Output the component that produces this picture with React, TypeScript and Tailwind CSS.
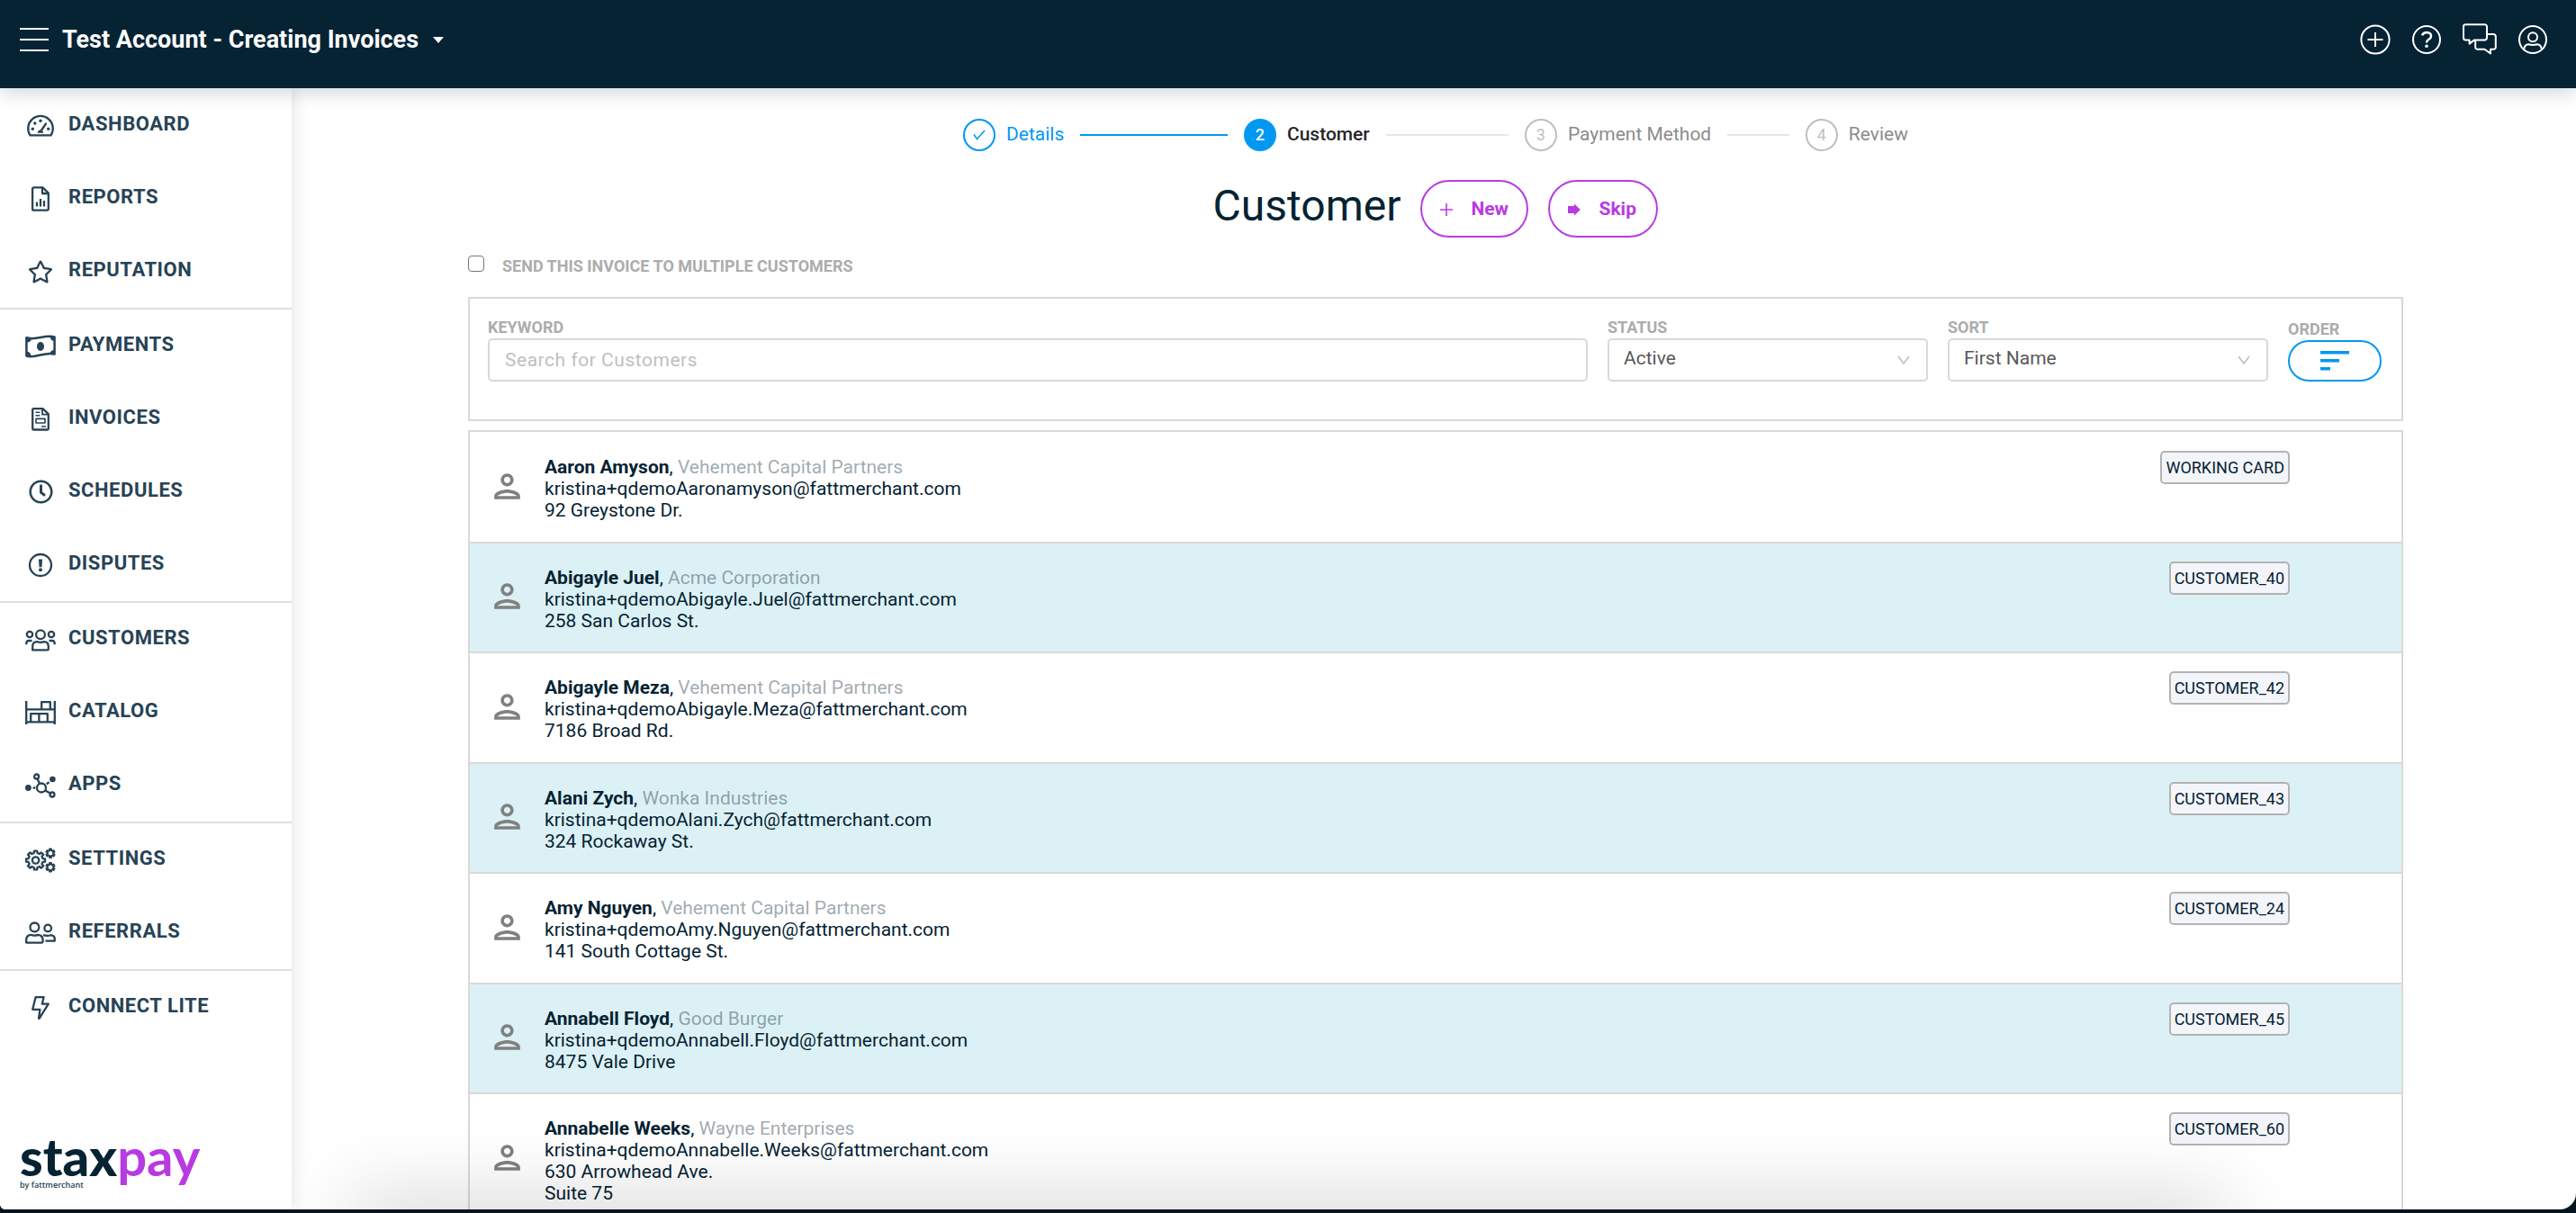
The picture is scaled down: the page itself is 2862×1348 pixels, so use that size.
import type { ReactNode } from 'react';
import { FaRegClock, FaRegStar } from 'react-icons/fa';
import { MdOutlinePerson } from 'react-icons/md';

interface NavItem {
  label: string;
  icon: ReactNode;
}

interface Customer {
  name: string;
  company: string;
  email: string;
  address: string[];
  tag: string;
}

// outline of a cog with rounded-off square teeth
function gearPath(cx: number, cy: number, outer: number, inner: number, teeth: number) {
  const points: string[] = [];
  const step = (Math.PI * 2) / teeth;
  for (let i = 0; i < teeth; i++) {
    const a = i * step - Math.PI / 2;
    const corners = [
      [inner, -0.3],
      [outer, -0.2],
      [outer, 0.2],
      [inner, 0.3],
    ];
    corners.forEach(([r, f]) => {
      const x = cx + r * Math.cos(a + f * step);
      const y = cy + r * Math.sin(a + f * step);
      points.push(`${x.toFixed(2)} ${y.toFixed(2)}`);
    });
  }
  return `M${points.join('L')}Z`;
}

function NavIcon({ children }: { children: ReactNode }) {
  return (
    <svg
      viewBox="0 0 34 28"
      className="w-[34px] h-7"
      fill="none"
      stroke="currentColor"
      strokeWidth="2.3"
      strokeLinejoin="round"
      aria-hidden="true"
    >
      {children}
    </svg>
  );
}

const navGroups: NavItem[][] = [
  [
    {
      label: 'DASHBOARD',
      icon: (
        <NavIcon>
          <path d="M5.5 24.3H28.5A13.8 13.8 0 1 0 5.5 24.3Z" />
          <path d="M17.5 19.5L23 11.5" strokeLinecap="round" />
          <path d="M14 21.2a3 3 0 0 1 5.8 0z" fill="currentColor" strokeWidth="1" />
          <g fill="currentColor" stroke="none">
            <circle cx="17" cy="8.3" r="1.7" />
            <circle cx="10.8" cy="11" r="1.7" />
            <circle cx="8.3" cy="17.2" r="1.7" />
            <circle cx="25.7" cy="17.2" r="1.7" />
          </g>
        </NavIcon>
      ),
    },
    {
      label: 'REPORTS',
      icon: (
        <NavIcon>
          <path d="M9.6 1.3H19.5L25.8 7.6V25.2a1.5 1.5 0 0 1-1.5 1.5H9.6a1.5 1.5 0 0 1-1.5-1.5V2.8a1.5 1.5 0 0 1 1.5-1.5z" />
          <path d="M19 1.8V8H25.4" />
          <path d="M13 17.5v5M17 14v8.5M21 16v6.5" />
        </NavIcon>
      ),
    },
    { label: 'REPUTATION', icon: <FaRegStar className="size-7" /> },
  ],
  [
    {
      label: 'PAYMENTS',
      icon: (
        <NavIcon>
          <path d="M1.4 4.3C12 8 21 0.4 32.6 3.4V22.6C22 19.4 12 27.6 1.4 24.6Z" strokeWidth="2.5" />
          <ellipse cx="17" cy="14" rx="4" ry="5" fill="currentColor" stroke="none" />
          <path
            d="M2 5.5L7 6.5Q6 9 2 9.5ZM32 3.5L27.5 3.5Q28.5 7.5 32 8ZM2 19.5Q5.5 20 6.5 24L2 24.5ZM32 18Q28.5 18 27.5 21.5L32 22.5Z"
            fill="currentColor"
            stroke="none"
          />
        </NavIcon>
      ),
    },
    {
      label: 'INVOICES',
      icon: (
        <NavIcon>
          <path d="M9.2 2.2H19.5L25.8 8.2V24.5a1 1 0 0 1-1 1H9.2a1 1 0 0 1-1-1V3.2a1 1 0 0 1 1-1z" />
          <path d="M19 2.4V8.6H25.4" strokeWidth="1.8" />
          <path d="M11.5 6.2h4.8M11.5 9.8h4.8M18 22h5" strokeWidth="1.6" />
          <path d="M12 13.4H22V18H12z" strokeWidth="1.6" />
        </NavIcon>
      ),
    },
    { label: 'SCHEDULES', icon: <FaRegClock className="size-[27px]" /> },
    {
      label: 'DISPUTES',
      icon: (
        <NavIcon>
          <circle cx="17" cy="14" r="12" />
          <path d="M15 7.6h4l-.5 8.6h-3z" fill="currentColor" stroke="none" />
          <circle cx="17" cy="19.2" r="2" fill="currentColor" stroke="none" />
        </NavIcon>
      ),
    },
  ],
  [
    {
      label: 'CUSTOMERS',
      icon: (
        <NavIcon>
          <circle cx="17" cy="8.2" r="4.9" />
          <circle cx="5" cy="8" r="3.2" />
          <circle cx="29" cy="8" r="3.2" />
          <path d="M8.2 25.4V21.5Q8.2 16.4 13 16.2Q17 17.6 21 16.2Q25.8 16.4 25.8 21.5V24.4a1 1 0 0 1-1 1H9.2a1 1 0 0 1-1-1z" />
          <path d="M1.2 19.2Q1.2 15 4 15H7.5M32.8 19.2Q32.8 15 30 15H26.5" />
        </NavIcon>
      ),
    },
    {
      label: 'CATALOG',
      icon: (
        <NavIcon>
          <path d="M1.2 1V27M32.8 1V27M1 10.4H33M1 24.4H33" />
          <path d="M18.2 10V2.2H27.8V10M6.2 24V15.2H24.8V24M15.4 15.2V24" />
        </NavIcon>
      ),
    },
    {
      label: 'APPS',
      icon: (
        <NavIcon>
          <circle cx="18" cy="16.5" r="5" />
          <circle cx="12.6" cy="4" r="2.5" />
          <circle cx="30" cy="24" r="2.5" />
          <circle cx="30.4" cy="7" r="3.3" fill="currentColor" stroke="none" />
          <circle cx="3.4" cy="16.5" r="3.4" fill="currentColor" stroke="none" />
          <path d="M13.6 6.4L15.8 11.8M22.2 19.4L27.8 22.6M8.6 16.5h2.6M23.6 12.4l3-2.2" />
        </NavIcon>
      ),
    },
  ],
  [
    {
      label: 'SETTINGS',
      icon: (
        <NavIcon>
          <path d={gearPath(11.6, 14, 10.6, 8.2, 8)} />
          <circle cx="11.6" cy="14" r="3.7" />
          <path d={gearPath(28, 6.2, 4.8, 3.2, 6)} strokeWidth="2" />
          <path d={gearPath(28, 21.8, 4.8, 3.2, 6)} strokeWidth="2" />
        </NavIcon>
      ),
    },
    {
      label: 'REFERRALS',
      icon: (
        <NavIcon>
          <circle cx="10.4" cy="7.4" r="4.9" />
          <circle cx="25.2" cy="8.4" r="3.8" />
          <path d="M1.2 24.6V21.5Q1.2 16.4 6 15.8Q10 17.4 14.4 15.8Q19.6 16.4 19.6 21.5V23.6a1 1 0 0 1-1 1H2.2a1 1 0 0 1-1-1z" />
          <path d="M20 16.2Q25 17.6 28.6 16.2Q32.8 17 32.8 20.4V22.6H22.4" />
        </NavIcon>
      ),
    },
  ],
  [
    {
      label: 'CONNECT LITE',
      icon: (
        <NavIcon>
          <path d="M11.6 2.2H20.6L18.8 9.6H25.8L15.6 25.8H15L16.4 15.8H8.2Z" />
        </NavIcon>
      ),
    },
  ],
];

const steps = [
  { label: 'Details', state: 'done' },
  { label: 'Customer', state: 'active' },
  { label: 'Payment Method', state: 'waiting' },
  { label: 'Review', state: 'waiting' },
];

const customers: Customer[] = [
  {
    name: 'Aaron Amyson',
    company: 'Vehement Capital Partners',
    email: 'kristina+qdemoAaronamyson@fattmerchant.com',
    address: ['92 Greystone Dr.'],
    tag: 'WORKING CARD',
  },
  {
    name: 'Abigayle Juel',
    company: 'Acme Corporation',
    email: 'kristina+qdemoAbigayle.Juel@fattmerchant.com',
    address: ['258 San Carlos St.'],
    tag: 'CUSTOMER_40',
  },
  {
    name: 'Abigayle Meza',
    company: 'Vehement Capital Partners',
    email: 'kristina+qdemoAbigayle.Meza@fattmerchant.com',
    address: ['7186 Broad Rd.'],
    tag: 'CUSTOMER_42',
  },
  {
    name: 'Alani Zych',
    company: 'Wonka Industries',
    email: 'kristina+qdemoAlani.Zych@fattmerchant.com',
    address: ['324 Rockaway St.'],
    tag: 'CUSTOMER_43',
  },
  {
    name: 'Amy Nguyen',
    company: 'Vehement Capital Partners',
    email: 'kristina+qdemoAmy.Nguyen@fattmerchant.com',
    address: ['141 South Cottage St.'],
    tag: 'CUSTOMER_24',
  },
  {
    name: 'Annabell Floyd',
    company: 'Good Burger',
    email: 'kristina+qdemoAnnabell.Floyd@fattmerchant.com',
    address: ['8475 Vale Drive'],
    tag: 'CUSTOMER_45',
  },
  {
    name: 'Annabelle Weeks',
    company: 'Wayne Enterprises',
    email: 'kristina+qdemoAnnabelle.Weeks@fattmerchant.com',
    address: ['630 Arrowhead Ave.', 'Suite 75'],
    tag: 'CUSTOMER_60',
  },
];

function Header() {
  return (
    <header className="relative z-20 flex h-[98px] shrink-0 items-start justify-between bg-[#052333] pl-[22px] pr-8 text-white shadow-[0_4px_20px_rgba(5,35,51,0.2)]">
      <div className="flex h-[88px] items-center">
        <button type="button" aria-label="Toggle menu" className="flex flex-col gap-[10px]">
          <span className="block h-[2px] w-8 bg-white" />
          <span className="block h-[2px] w-8 bg-white" />
          <span className="block h-[2px] w-8 bg-white" />
        </button>
        <button type="button" className="ml-[15px] flex items-center text-[27px] font-bold">
          Test Account - Creating Invoices
          <svg viewBox="0 0 12 7" className="ml-4 h-[7px] w-3" fill="currentColor" aria-hidden="true">
            <path d="M0 0H12L6 7Z" />
          </svg>
        </button>
      </div>

      <div className="flex h-[88px] items-center gap-6">
        <button type="button" aria-label="Create">
          <svg viewBox="0 0 34 34" className="size-[34px]" fill="none" stroke="currentColor" strokeWidth="2">
            <circle cx="17" cy="17" r="15.6" />
            <path d="M17 9V25M8.5 17H25.5" />
          </svg>
        </button>
        <button type="button" aria-label="Help">
          <svg viewBox="0 0 32 34" className="h-[34px] w-8" fill="none" stroke="currentColor" strokeWidth="2">
            <circle cx="16" cy="17" r="15" />
            <path d="M11 12.4Q12.4 9 16.2 9Q21 9.2 21 13Q21 15.4 18.4 16.8Q16 18.2 16 20.4" strokeWidth="2.4" />
            <circle cx="16" cy="24.2" r="1.8" fill="currentColor" stroke="none" />
          </svg>
        </button>
        <button type="button" aria-label="Messages">
          <svg viewBox="0 0 38 36" className="h-9 w-[38px]" fill="none" stroke="currentColor" strokeWidth="2" strokeLinejoin="round">
            <path d="M3.4 1.2H24.6A2.4 2.4 0 0 1 27 3.6V16A2.4 2.4 0 0 1 24.6 18.4H13.2L7.6 22.6V18.4H3.4A2.4 2.4 0 0 1 1 16V3.6A2.4 2.4 0 0 1 3.4 1.2Z" />
            <path d="M27 12H34.4A2.4 2.4 0 0 1 36.8 14.4V26.4A2.4 2.4 0 0 1 34.4 28.8H31V33.4L24.4 28.8H16.6A2.4 2.4 0 0 1 14.2 26.4V18.6" />
          </svg>
        </button>
        <button type="button" aria-label="Profile">
          <svg viewBox="0 0 32 34" className="h-[34px] w-8" fill="none" stroke="currentColor" strokeWidth="2">
            <circle cx="16" cy="17" r="15" />
            <circle cx="16" cy="14.2" r="5" />
            <path d="M6.2 28Q6.6 22.4 11.4 22.2Q16 23.6 20.6 22.2Q25.4 22.4 25.8 28" />
          </svg>
        </button>
      </div>
    </header>
  );
}

function Sidebar() {
  return (
    <aside className="relative z-10 flex w-[324px] shrink-0 flex-col bg-white pt-px shadow-[2px_0_16px_rgba(5,35,51,0.12)]">
      <nav className="divide-y-2 divide-[#dddde6]">
        {navGroups.map((group) => (
          <ul key={group[0].label}>
            {group.map((item) => (
              <li key={item.label}>
                <a href="#" className="flex h-[81px] items-center pl-7 text-[#274355]">
                  <span className="flex w-[34px] justify-center">{item.icon}</span>
                  <span className="pb-1 pl-[14px] text-[22px] font-bold tracking-wide">{item.label}</span>
                </a>
              </li>
            ))}
          </ul>
        ))}
      </nav>
      <div className="mt-auto pb-[22px] pl-[22px]">
        <div className="font-['Lato'] text-[58px] leading-[54px]">
          <span className="font-black text-[#052333]">stax</span>
          <span className="font-bold text-[#b83be2]">pay</span>
        </div>
        <p className="font-['Open_Sans'] text-[9px] leading-[10px] font-semibold text-[#274355]">by fattmerchant</p>
      </div>
    </aside>
  );
}

function Steps() {
  return (
    <ol className="mx-auto flex w-[1050px] items-center text-[21px] leading-8">
      {steps.map((step, i) => (
        <li
          key={step.label}
          className={i < steps.length - 1 ? 'mr-[18px] flex w-[294px] items-center' : 'flex items-center'}
        >
          {step.state === 'done' && (
            <span className="flex size-9 shrink-0 items-center justify-center rounded-full border-2 border-[#0098f0] text-[#0098f0]">
              <svg viewBox="0 0 14 12" className="h-3 w-[14px]" fill="none" stroke="currentColor" strokeWidth="1.5" aria-hidden="true">
                <path d="M1 5.5L4.5 10.5L13 1" />
              </svg>
            </span>
          )}
          {step.state === 'active' && (
            <span className="flex size-9 shrink-0 items-center justify-center rounded-full bg-[#0098f0] text-lg font-medium text-white">
              {i + 1}
            </span>
          )}
          {step.state === 'waiting' && (
            <span className="flex size-9 shrink-0 items-center justify-center rounded-full border-2 border-[#bfbfbf] text-lg text-[#bfbfbf]">
              {i + 1}
            </span>
          )}
          <span
            className={
              step.state === 'done'
                ? 'ml-3 pb-[3px] text-[#0098f0]'
                : step.state === 'active'
                  ? 'ml-3 pb-[3px] font-medium text-[#262626]'
                  : 'ml-3 pb-[3px] whitespace-nowrap text-[#8c8c8c]'
            }
          >
            {step.label}
          </span>
          {i < steps.length - 1 && (
            <span className={step.state === 'done' ? 'ml-[18px] h-[2px] flex-1 bg-[#0098f0]' : 'ml-[18px] h-[2px] flex-1 bg-[#e8e8e8]'} />
          )}
        </li>
      ))}
    </ol>
  );
}

function SelectField({ id, label, options }: { id: string; label: string; options: string[] }) {
  return (
    <div className="flex w-[356px] shrink-0 flex-col">
      <label htmlFor={id} className="text-lg leading-6 font-bold text-[#acacac]">
        {label}
      </label>
      <div className="relative">
        <select
          id={id}
          className="h-12 w-full appearance-none rounded-[5px] border-2 border-[#d9d9d9] bg-white px-4 pb-[3px] text-[21px] text-[#595959]"
        >
          {options.map((option) => (
            <option key={option}>{option}</option>
          ))}
        </select>
        <svg
          viewBox="0 0 14 10"
          className="pointer-events-none absolute top-[19px] right-5 h-[10px] w-[14px]"
          fill="none"
          stroke="#bfbfbf"
          strokeWidth="1.6"
          aria-hidden="true"
        >
          <path d="M1 1L7 9L13 1" />
        </svg>
      </div>
    </div>
  );
}

function Filters() {
  return (
    <form className="flex h-[138px] gap-[22px] border-2 border-[#d9d9d9] pt-5 pr-[22px] pl-5">
      <div className="flex flex-1 flex-col">
        <label htmlFor="keyword" className="text-lg leading-6 font-bold text-[#acacac]">
          KEYWORD
        </label>
        <input
          id="keyword"
          type="text"
          placeholder="Search for Customers"
          className="h-12 w-full rounded-[5px] border-2 border-[#d9d9d9] px-[17px] text-[21px] tracking-wide placeholder:text-[#bfbfbf]"
        />
      </div>
      <SelectField id="status" label="STATUS" options={['Active', 'Inactive']} />
      <SelectField id="sort" label="SORT" options={['First Name', 'Last Name', 'Company']} />
      <div className="flex w-[104px] shrink-0 flex-col pt-[2px]">
        <span className="text-lg leading-6 font-bold text-[#acacac]">ORDER</span>
        <button
          type="button"
          aria-label="Sort order"
          className="flex h-[46px] items-center justify-center rounded-full border-2 border-[#0098f0] text-[#0098f0]"
        >
          <svg viewBox="0 0 32 22" className="h-[22px] w-8" fill="currentColor" aria-hidden="true">
            <path d="M0 0H32V3.4H0zM0 9H21V12.4H0zM0 18H11V21.4H0z" />
          </svg>
        </button>
      </div>
    </form>
  );
}

function CustomerRow({ customer }: { customer: Customer }) {
  return (
    <li className="flex min-h-[123px] border-b-2 border-[#d9d9d9] pr-[124px] pl-5 even:min-h-[122px] even:bg-[#dcf1f5]">
      <div className="flex items-center pb-[3px]">
        <MdOutlinePerson className="size-[43px] text-[#808080]" />
      </div>
      <div className="flex-1 pt-[26px] pb-[22px] pl-5 text-[21px] leading-6 text-[#052333]">
        <p>
          <span className="font-bold">{customer.name}</span>, <span className="text-[#052333]/40">{customer.company}</span>
        </p>
        <p>{customer.email}</p>
        {customer.address.map((line) => (
          <p key={line}>{line}</p>
        ))}
      </div>
      <div className="pt-5">
        <span className="flex h-[37px] items-center rounded-[5px] border-2 border-[#b3b3b3] bg-[#f4f5fa] px-1 text-lg text-[#052333]">
          {customer.tag}
        </span>
      </div>
    </li>
  );
}

export default function App() {
  return (
    <div className="h-screen overflow-hidden bg-[#04151f] pb-1 font-['Roboto',sans-serif]">
      <div className="relative flex h-full flex-col overflow-hidden rounded-br-[18px] rounded-bl-[6px] bg-white">
        <Header />
        <div className="flex min-h-0 flex-1">
          <Sidebar />
          <main className="min-w-0 flex-1 overflow-hidden pt-[34px] pr-48 pl-[196px]">
            <Steps />

            <div className="mt-8 flex items-center justify-center gap-[22px]">
              <h1 className="pb-[6px] text-[48px] leading-[58px] text-[#052333]">Customer</h1>
              <button
                type="button"
                className="flex h-16 w-[120px] items-center rounded-full border-2 border-[#b83be2] pt-[2px] pl-5 text-[21px] font-bold text-[#b83be2]"
              >
                <svg viewBox="0 0 14 14" className="mr-5 size-[14px]" fill="none" stroke="currentColor" strokeWidth="1.6" aria-hidden="true">
                  <path d="M7 0V14M0 7H14" />
                </svg>
                New
              </button>
              <button
                type="button"
                className="flex h-16 w-[122px] items-center rounded-full border-2 border-[#b83be2] pt-[2px] pl-5 text-[21px] font-bold text-[#b83be2]"
              >
                <svg viewBox="0 0 14 14" className="mr-5 size-[14px]" fill="currentColor" aria-hidden="true">
                  <path d="M0 3H7V0.4L14 7L7 13.6V11H0Z" />
                </svg>
                Skip
              </button>
            </div>

            <label className="mt-4 flex h-[31px] items-center text-lg font-bold text-[#acacac]">
              <input
                type="checkbox"
                className="mr-5 mb-[6px] size-[18px] appearance-none rounded-[4px] border border-[#767676] bg-white checked:bg-[#0098f0]"
              />
              SEND THIS INVOICE TO MULTIPLE CUSTOMERS
            </label>

            <div className="mt-[19px]">
              <Filters />
            </div>

            <ul className="mt-[10px] border-2 border-[#d9d9d9] pt-px">
              {customers.map((customer) => (
                <CustomerRow key={customer.name} customer={customer} />
              ))}
            </ul>
          </main>
        </div>

        {/* soft shade along the bottom edge of the window */}
        <div className="pointer-events-none absolute inset-x-[390px] -bottom-10 z-30 h-10 shadow-[0_0_90px_rgba(0,0,0,0.28)]" />
      </div>
    </div>
  );
}
